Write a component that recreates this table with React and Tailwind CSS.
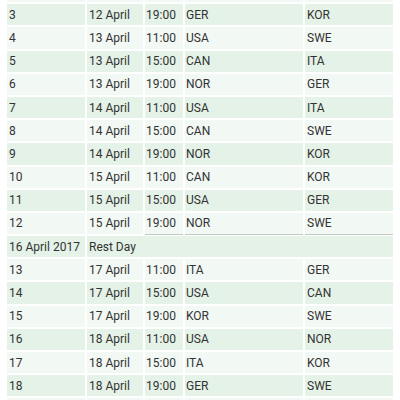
import React from "react";

const matches = [
  ["", "", "", "", ""],
  ["3", "12 April", "19:00", "GER", "KOR"],
  ["4", "13 April", "11:00", "USA", "SWE"],
  ["5", "13 April", "15:00", "CAN", "ITA"],
  ["6", "13 April", "19:00", "NOR", "GER"],
  ["7", "14 April", "11:00", "USA", "ITA"],
  ["8", "14 April", "15:00", "CAN", "SWE"],
  ["9", "14 April", "19:00", "NOR", "KOR"],
  ["10", "15 April", "11:00", "CAN", "KOR"],
  ["11", "15 April", "15:00", "USA", "GER"],
  ["12", "15 April", "19:00", "NOR", "SWE"],
  ["rest"],
  ["13", "17 April", "11:00", "ITA", "GER"],
  ["14", "17 April", "15:00", "USA", "CAN"],
  ["15", "17 April", "19:00", "KOR", "SWE"],
  ["16", "18 April", "11:00", "USA", "NOR"],
  ["17", "18 April", "15:00", "ITA", "KOR"],
  ["18", "18 April", "19:00", "GER", "SWE"],
  ["", "", "", "", ""],
];

const Schedule = () => {
  return (
    <div
      className="w-[400px] h-[400px] overflow-hidden bg-white text-[#333333]"
      style={{ fontFamily: "Roboto, 'Liberation Sans', sans-serif" }}
    >
      <table className="-mt-[21px] ml-[5px] border-separate border-spacing-[2px] text-[12px] leading-none table-fixed w-[390px]">
        <colgroup>
          <col className="w-[78px]" />
          <col className="w-[56px]" />
          <col className="w-[38px]" />
          <col className="w-[118px]" />
          <col className="w-[88px]" />
        </colgroup>
        <tbody>
          {matches.map((m, i) => {
            const bg = i % 2 === 1 ? "bg-[#e4f2e7]" : "bg-[#f2f8f3]";
            if (m[0] === "rest") {
              return (
                <tr key={i} className="h-[21.2px]">
                  <td className={`${bg} pl-[2px]`}>16 April 2017</td>
                  <td colSpan={4} className={`${bg} pl-[2px]`}>Rest Day</td>
                </tr>
              );
            }
            const last = m[0] === "12";
            return (
              <tr key={i} className="h-[21.2px]">
                <td className={`${bg} pl-[2px]`}>{m[0]}</td>
                <td className={`${bg} pl-[2px]`}>{m[1]}</td>
                <td className={`${bg} pl-[1px] ${last ? "shadow-[0_1px_0_#c4c8c5]" : ""}`}>{m[2]}</td>
                <td className={`${bg} pl-[1px] ${last ? "shadow-[0_1px_0_#c4c8c5]" : ""}`}>{m[3]}</td>
                <td className={`${bg} pl-[2px] ${last ? "shadow-[0_1px_0_#c4c8c5]" : ""}`}>{m[4]}</td>
              </tr>
            );
          })}
        </tbody>
      </table>
    </div>
  );
};

export default function App() {
  return <Schedule />;
}
